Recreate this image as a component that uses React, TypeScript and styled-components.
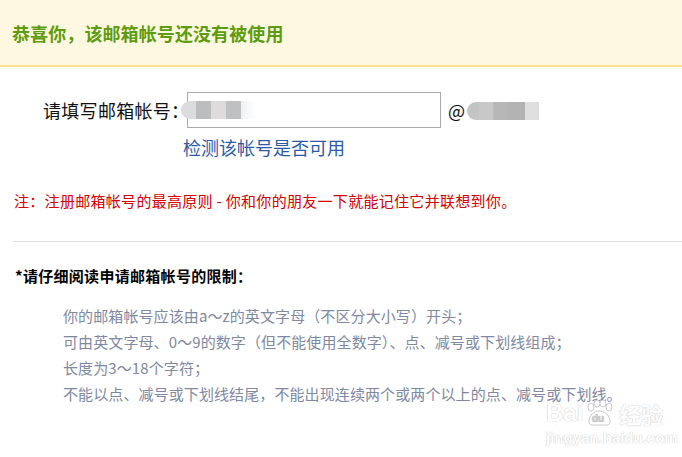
import React from "react";
import styled, { createGlobalStyle } from "styled-components";

const Global = createGlobalStyle`
  html, body { margin: 0; padding: 0; background: #fff; }
  body { font-family: "Microsoft YaHei", "Noto Sans CJK SC", "Noto Sans", sans-serif; overflow: hidden; }
`;

const Page = styled.div`
  width: 682px;
  height: 457px;
  position: relative;
  overflow: hidden;
  background: #fff;
`;

const Header = styled.div`
  height: 65px;
  background: #fff8e1;
  border-bottom: 2px solid #fde38f;
  display: flex;
  align-items: center;
  padding-left: 12px;
  box-sizing: content-box;
`;

const Title = styled.h1`
  margin: 0;
  font-size: 18px;
  font-weight: bold;
  color: #5c9c0e;
  line-height: 1;
  letter-spacing: 0.1px;
`;

const FormBlock = styled.div`
  padding-top: 25px;
  display: flex;
  flex-direction: column;
`;

const Row = styled.div`
  display: flex;
  align-items: center;
  height: 36px;
`;

const Label = styled.span`
  margin-left: 43px;
  font-size: 18px;
  color: #111;
  width: 144px;
  white-space: nowrap;
  letter-spacing: 0.3px;
`;

const InputBox = styled.div`
  width: 252px;
  height: 34px;
  border: 1px solid #aaa;
  position: relative;
  background: #fff;
`;

const Blur = styled.div<{ $left: number; $top: number }>`
  position: absolute;
  left: ${(p) => p.$left}px;
  top: ${(p) => p.$top}px;
  display: flex;
  height: 18px;
`;

const Chip = styled.div<{ $c: string; $w: number; $round?: boolean }>`
  width: ${(p) => p.$w}px;
  height: 100%;
  background: ${(p) => p.$c};
  border-radius: ${(p) => (p.$round ? "9px 0 0 9px" : "0")};
`;

const Fade = styled.div<{ $w: number }>`
  width: ${(p) => p.$w}px;
  height: 100%;
  background: linear-gradient(90deg, #eef0f2, #fff);
`;

const Domain = styled.div`
  margin-left: 7px;
  position: relative;
  height: 36px;
  display: flex;
  align-items: center;
  font-size: 18px;
  color: #111;
  width: 100px;
`;

const CheckLink = styled.a`
  margin-left: 183px;
  margin-top: 7px;
  font-size: 18px;
  color: #2b5aa8;
  text-decoration: none;
  line-height: 24px;
`;

const Note = styled.p`
  margin: 32px 0 0 14px;
  font-size: 15px;
  color: #d40000;
  line-height: 20px;
  white-space: nowrap;
  letter-spacing: 0.3px;
`;

const Divider = styled.hr`
  margin: 30px 0 0 13px;
  border: none;
  border-top: 1px solid #dcdcdc;
  height: 0;
`;

const Heading = styled.h2`
  margin: 24px 0 0 15px;
  font-size: 15px;
  font-weight: bold;
  color: #000;
  line-height: 20px;
  white-space: nowrap;
  letter-spacing: 0.3px;
`;

const Rules = styled.ul`
  list-style: none;
  margin: 17px 0 0 63px;
  padding: 0;
`;

const Rule = styled.li`
  font-size: 15px;
  color: #8088a2;
  line-height: 26px;
  white-space: nowrap;
  letter-spacing: 0.1px;
`;

const Watermark = styled.div`
  position: absolute;
  left: 546px;
  top: 402px;
  display: flex;
  flex-direction: column;
  align-items: flex-start;
  color: #fff;
  text-shadow: 0 0 1px #c9c9c9, 0 0 1px #c9c9c9;
  font-family: "Liberation Sans", Arial, sans-serif;
  pointer-events: none;
`;

const WmBig = styled.div`
  font-size: 24px;
  font-weight: bold;
  line-height: 20px;
  height: 22px;
  display: flex;
  align-items: center;
  gap: 2px;
`;

const WmCjk = styled.span`
  font-family: "Noto Sans CJK SC", sans-serif;
  font-size: 22px;
  margin-left: 4px;
`;

const WmSmall = styled.div`
  font-size: 15px;
  line-height: 18px;
  margin-top: 5px;
  font-weight: bold;
`;

export default function App() {
  return (
    <Page>
      <Global />
      <Header>
        <Title>恭喜你，该邮箱帐号还没有被使用</Title>
      </Header>
      <FormBlock>
        <Row>
          <Label>请填写邮箱帐号：</Label>
          <InputBox>
            <Blur $left={-7} $top={8}>
              <Chip $c="#dcdcdc" $w={15} $round />
              <Chip $c="#bcbdbf" $w={15} />
              <Chip $c="#dedcda" $w={15} />
              <Chip $c="#bfc0c2" $w={15} />
              <Fade $w={14} />
            </Blur>
          </InputBox>
          <Domain>
            @
            <Blur $left={19} $top={10}>
              <Chip $c="#c4c4c4" $w={12} $round />
              <Chip $c="#c8c8c8" $w={14} />
              <Chip $c="#b7b7b7" $w={16} />
              <Chip $c="#b3b3b3" $w={16} />
              <Chip $c="#dedede" $w={14} />
            </Blur>
          </Domain>
        </Row>
        <CheckLink href="#">检测该帐号是否可用</CheckLink>
      </FormBlock>
      <Note>注：注册邮箱帐号的最高原则 - 你和你的朋友一下就能记住它并联想到你。</Note>
      <Divider />
      <Heading>*请仔细阅读申请邮箱帐号的限制：</Heading>
      <Rules>
        <Rule>你的邮箱帐号应该由a～z的英文字母（不区分大小写）开头；</Rule>
        <Rule>可由英文字母、0～9的数字（但不能使用全数字）、点、减号或下划线组成；</Rule>
        <Rule>长度为3～18个字符；</Rule>
        <Rule>不能以点、减号或下划线结尾，不能出现连续两个或两个以上的点、减号或下划线。</Rule>
      </Rules>
      <Watermark>
        <WmBig>
          Bai
          <svg width="28" height="26" viewBox="0 0 28 26">
            <g fill="#fff" stroke="#c9c9c9" strokeWidth="1">
              <ellipse cx="6" cy="7" rx="3" ry="4" />
              <ellipse cx="12" cy="3.5" rx="3" ry="3.5" />
              <ellipse cx="18" cy="3.5" rx="3" ry="3.5" />
              <ellipse cx="24" cy="7" rx="3" ry="4" />
              <path d="M4 22 C4 14 10 11 14 11 C18 11 25 14 25 22 C25 26 20 25 14 25 C8 25 4 26 4 22 Z" />
            </g>
            <text x="7" y="22" fontSize="10" fontWeight="bold" fill="#c9c9c9" fontFamily="Liberation Sans, sans-serif">du</text>
          </svg>
          <WmCjk>经验</WmCjk>
        </WmBig>
        <WmSmall>jingyan.baidu.com</WmSmall>
      </Watermark>
    </Page>
  );
}
